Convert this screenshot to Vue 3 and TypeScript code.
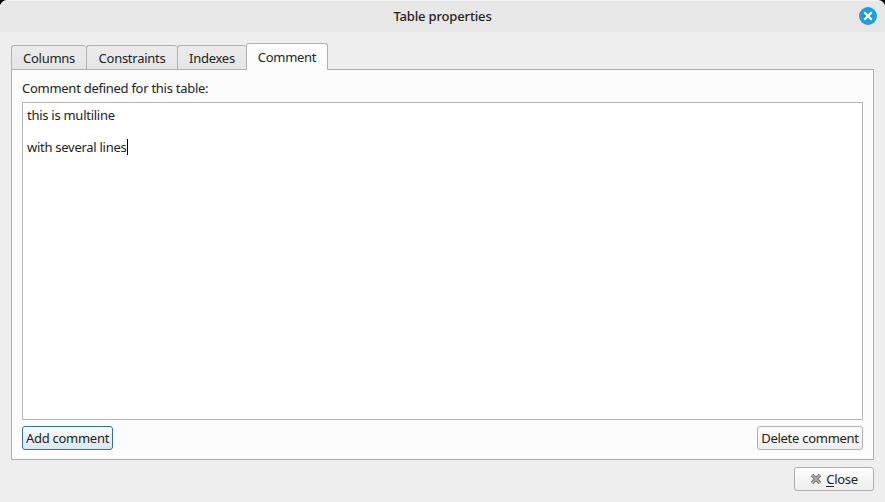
<script setup lang="ts">
import { ref } from 'vue'

interface Tab {
  id: string
  label: string
}

const tabs: Tab[] = [
  { id: 'columns', label: 'Columns' },
  { id: 'constraints', label: 'Constraints' },
  { id: 'indexes', label: 'Indexes' },
  { id: 'comment', label: 'Comment' },
]
const active = ref('comment')
const lines: string[] = ['this is multiline', '', 'with several lines']
</script>

<template>
  <div class="screen">
    <div class="dialog">
      <header class="titlebar">
        <span class="spacer"></span>
        <span class="title">Table properties</span>
        <span class="window-actions">
          <svg class="close-icon" width="18" height="18" viewBox="0 0 18 18">
            <circle cx="9" cy="9" r="9" fill="#219fdb" />
            <path d="M5.3 5.3 12.7 12.7M12.7 5.3 5.3 12.7" stroke="#fff" stroke-width="2.1" />
          </svg>
        </span>
      </header>
      <main class="body">
        <nav class="tabs">
          <div
            v-for="tab in tabs"
            :key="tab.id"
            :class="['tab', tab.id, { active: active === tab.id }]"
            @click="active = tab.id"
          ><span>{{ tab.label }}</span></div>
        </nav>
        <section class="panel">
          <div class="caption"><span>Comment defined for this table:</span></div>
          <div class="editor">
            <div v-for="(line, i) in lines" :key="i" class="line">
              <span>{{ line }}</span><i v-if="i === lines.length - 1" class="caret"></i>
            </div>
          </div>
          <div class="actions">
            <div class="button add"><span>Add comment</span></div>
            <div class="button delete"><span>Delete comment</span></div>
          </div>
        </section>
        <footer class="footer">
          <div class="button close">
            <svg width="12" height="12" viewBox="0 0 12 12">
              <path d="M2 2 10 10M10 2 2 10" stroke="#777" stroke-width="3.7" />
              <path d="M1.8 1.8 10.2 10.2M10.2 1.8 1.8 10.2" stroke="#b0b0b0" stroke-width="1.6" />
            </svg>
            <span class="label"><span class="mnemonic">C</span>lose</span>
          </div>
        </footer>
      </main>
    </div>
  </div>
</template>

<style>
body {
  margin: 0;
  overflow: hidden;
}
</style>

<style scoped>
.screen {
  width: 885px;
  height: 502px;
  background: #000;
  font: 13px/16px 'Noto Sans', 'Open Sans', sans-serif;
  letter-spacing: -0.27px;
  color: #232323;
  white-space: nowrap;
}
.dialog {
  box-sizing: border-box;
  height: 502px;
  display: flex;
  flex-direction: column;
  background: #eeeeee;
  border-top: 1px solid #f2f2f2;
  border-radius: 7px 7px 0 0;
  overflow: hidden;
}
.titlebar {
  height: 31px;
  flex: none;
  display: grid;
  grid-template-columns: 1fr auto 1fr;
  align-items: center;
  background: #e7e7e7;
}
.title {
  font-weight: 500;
  letter-spacing: -0.16px;
  padding-bottom: 2px;
}
.window-actions {
  display: flex;
  justify-content: flex-end;
  padding: 0 8px 1px 0;
}
.close-icon {
  display: block;
}
.body {
  display: flex;
  flex-direction: column;
  padding: 11px 11px 0;
}
.tabs {
  display: flex;
  align-items: flex-end;
  height: 27px;
  margin-bottom: -1px;
  z-index: 1;
}
.tab {
  box-sizing: border-box;
  display: flex;
  justify-content: center;
  align-items: center;
  height: 25px;
  border: 1px solid #b1b1b1;
  border-right: 0;
  border-radius: 3px 3px 0 0;
  background: linear-gradient(#ebebeb, #e5e5e5);
}
.columns { width: 75px; }
.constraints { width: 91px; }
.indexes { width: 69px; }
.comment { width: 82px; }
.tab.active {
  height: 27px;
  border-right: 1px solid #b1b1b1;
  border-bottom: 0;
  background: #fcfcfc;
}
.panel {
  box-sizing: border-box;
  height: 391px;
  padding: 10px;
  border: 1px solid #adadad;
  background: #fcfcfc;
}
.caption {
  height: 22px;
}
.editor {
  box-sizing: border-box;
  height: 318px;
  padding: 4px;
  border: 1px solid #b5b5b5;
  background: #fff;
}
.line {
  height: 16px;
  display: flex;
}
.caret {
  width: 1px;
  height: 16px;
  background: #000;
}
.actions {
  display: flex;
  justify-content: space-between;
  margin-top: 6px;
}
.button {
  box-sizing: border-box;
  height: 24px;
  display: flex;
  justify-content: center;
  align-items: center;
  border: 1px solid #aeaeae;
  border-radius: 3px;
  background: linear-gradient(#fefefe, #ededed);
}
.add {
  width: 91px;
  border-color: #347199;
  background: linear-gradient(#f8fbfc, #d8e7ef);
}
.delete {
  width: 106px;
}
.footer {
  display: flex;
  justify-content: flex-end;
  padding-top: 7px;
}
.close {
  width: 80px;
  gap: 4px;
}
.mnemonic {
  display: inline-block;
  height: 15px;
  border-bottom: 1px solid #232323;
  line-height: 16px;
}
</style>
